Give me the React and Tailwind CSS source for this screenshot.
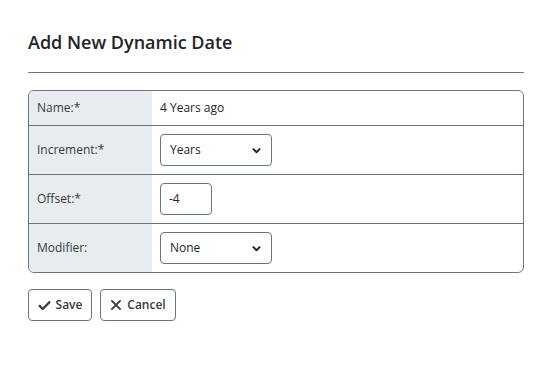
import React from 'react';

const ChevronDown = () => (
  <svg width="11" height="11" viewBox="0 0 16 16" fill="none" stroke="currentColor" strokeWidth="2.8" strokeLinecap="round" strokeLinejoin="round">
    <path d="M3.5 6l4.5 4.5L12.5 6" />
  </svg>
);

const CheckIcon = () => (
  <svg width="13" height="13" viewBox="0 0 16 16" fill="none" stroke="currentColor" strokeWidth="2.8" strokeLinecap="round" strokeLinejoin="round">
    <path d="M2 8.5l3.8 3.8L14 4" />
  </svg>
);

const XIcon = () => (
  <svg width="12" height="12" viewBox="0 0 16 16" fill="none" stroke="currentColor" strokeWidth="2.4" strokeLinecap="round">
    <path d="M2.5 2.5l11 11M13.5 2.5l-11 11" />
  </svg>
);

const Select = ({ value }) => (
  <div className="flex h-[32px] w-[112px] items-center justify-between rounded-[4px] border border-[#6c757d] bg-white pl-[9px] pr-[9px] text-[#212529]">
    <span>{value}</span>
    <ChevronDown />
  </div>
);

const Row = ({ label, first, children }) => (
  <div className={`grid grid-cols-[123px_1fr] ${first ? '' : 'border-t border-[#6c757d]'}`}>
    <div className={`flex items-center bg-[#e9ecef] pl-[8px] text-[#343a40] ${first ? 'h-[34px]' : 'h-[48px]'}`}>
      {label}
    </div>
    <div className="flex items-center pl-[8px]">{children}</div>
  </div>
);

export default function App() {
  return (
    <div className="min-h-screen bg-white px-[28px] pt-[29px] text-[12px]" style={{ fontFamily: '"Open Sans", sans-serif' }}>
      <h1 className="text-[18px] font-semibold leading-[27px] text-[#212529]">Add New Dynamic Date</h1>
      <div className="mt-[16px] h-px w-[496px] bg-[#6c757d]" />

      <div className="mt-[17px] w-[496px] overflow-hidden rounded-[6px] border border-[#6c757d]">
        <Row label="Name:*" first>
          <span className="text-[#212529]">4 Years ago</span>
        </Row>
        <Row label="Increment:*">
          <Select value="Years" />
        </Row>
        <Row label="Offset:*">
          <div className="flex h-[32px] w-[52px] items-center rounded-[4px] border border-[#6c757d] pl-[8px] text-[#212529]">-4</div>
        </Row>
        <Row label="Modifier:">
          <Select value="None" />
        </Row>
      </div>

      <div className="mt-[16px] flex gap-[8px]">
        <button className="flex h-[32px] w-[64px] items-center justify-center gap-[5px] rounded-[4px] border border-[#6c757d] bg-white font-semibold text-[#343a40]">
          <CheckIcon />
          Save
        </button>
        <button className="flex h-[32px] w-[76px] items-center justify-center gap-[5px] rounded-[4px] border border-[#6c757d] bg-white font-semibold text-[#343a40]">
          <XIcon />
          Cancel
        </button>
      </div>
    </div>
  );
}
